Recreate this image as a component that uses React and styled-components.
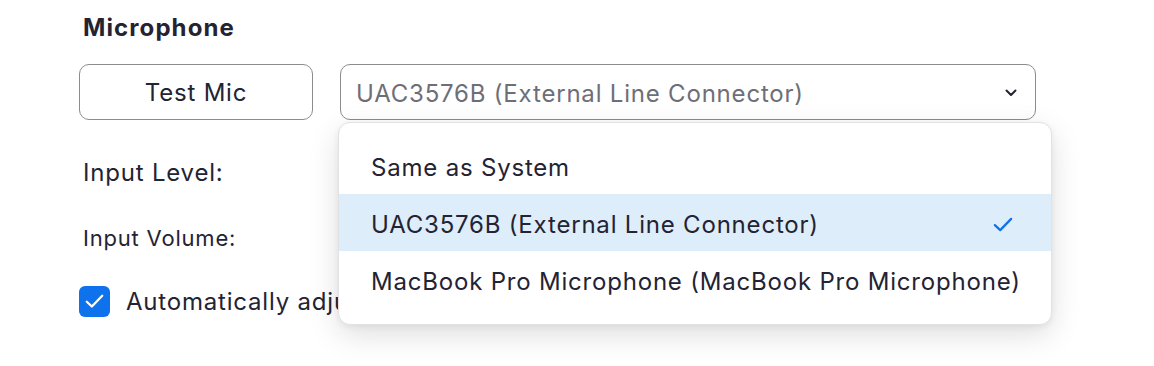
import React from "react";
import styled, { createGlobalStyle } from "styled-components";

const Global = createGlobalStyle`
  html, body { margin: 0; padding: 0; background: #ffffff; }
  body { font-family: Inter, "Noto Sans", sans-serif; color: #232333; letter-spacing: 0.8px; -webkit-font-smoothing: antialiased; }
`;

const Page = styled.div`
  width: 1154px;
  height: 366px;
  overflow: hidden;
  padding: 13px 0 0 79px;
  box-sizing: border-box;
  display: flex;
  flex-direction: column;
  white-space: nowrap;
`;

const Heading = styled.div`
  font-size: 24px;
  font-weight: 700;
  line-height: 30px;
  padding-left: 4px;
  letter-spacing: 1.1px;
`;

const ControlRow = styled.div`
  display: flex;
  gap: 27px;
  margin-top: 21px;
`;

const Button = styled.button`
  width: 234px;
  height: 56px;
  box-sizing: border-box;
  border: 1.5px solid #8c8c8c;
  border-radius: 10px;
  background: #fff;
  font-family: inherit;
  letter-spacing: inherit;
  font-size: 24px;
  color: #232333;
  padding: 1px 0 0;
`;

const SelectWrap = styled.div`
  position: relative;
`;

const SelectBox = styled.div`
  width: 696px;
  height: 56px;
  box-sizing: border-box;
  border: 1.5px solid #8c8c8c;
  border-radius: 10px;
  display: flex;
  align-items: center;
  justify-content: space-between;
  padding: 2px 18px 0 15px;
  font-size: 24px;
  color: #6e6e78;
`;

const Menu = styled.div`
  position: absolute;
  top: 58px;
  left: -2px;
  width: 714px;
  box-sizing: border-box;
  background: #fff;
  border: 1px solid #e2e2e6;
  border-radius: 12px;
  box-shadow: 0 10px 30px rgba(0, 0, 0, 0.13), 0 2px 6px rgba(0, 0, 0, 0.06);
  padding: 14px 0 16px;
  display: flex;
  flex-direction: column;
  z-index: 5;
`;

const MenuItem = styled.div`
  height: 57px;
  box-sizing: border-box;
  display: flex;
  align-items: center;
  justify-content: space-between;
  padding: 4px 38px 0 32px;
  font-size: 24px;
  white-space: nowrap;
  color: #232333;
  background: ${(p) => (p.$active ? "#deedfa" : "transparent")};
`;

const Label = styled.div`
  font-size: ${(p) => p.$size || 24}px;
  line-height: 30px;
  padding-left: 4px;
  margin-top: ${(p) => p.$mt}px;
`;

const CheckRow = styled.div`
  display: flex;
  align-items: center;
  gap: 16px;
  margin-top: 33px;
  font-size: 24px;
`;

const CheckBox = styled.div`
  width: 31px;
  height: 31px;
  flex: none;
  border-radius: 6px;
  background: #0e72ed;
  display: flex;
  align-items: center;
  justify-content: center;
`;

const Chevron = () => (
  <svg width="12" height="8" viewBox="0 0 12 8" fill="none">
    <path d="M1.5 1.5 L6 6 L10.5 1.5" stroke="#232333" strokeWidth="2" strokeLinecap="round" strokeLinejoin="round" />
  </svg>
);

const Tick = ({ color, w = 18, sw = 2.4 }) => (
  <svg width={w} height={w * 0.75} viewBox="0 0 16 12" fill="none">
    <path d="M1.5 6.5 L5.8 10.5 L14.5 1.5" stroke={color} strokeWidth={sw} strokeLinecap="round" strokeLinejoin="round" />
  </svg>
);

export default function App() {
  return (
    <>
      <Global />
      <Page>
        <Heading>Microphone</Heading>
        <ControlRow>
          <Button>Test Mic</Button>
          <SelectWrap>
            <SelectBox>
              <span>UAC3576B (External Line Connector)</span>
              <Chevron />
            </SelectBox>
            <Menu>
              <MenuItem>Same as System</MenuItem>
              <MenuItem $active>
                <span>UAC3576B (External Line Connector)</span>
                <Tick color="#0e72ed" w={20} sw={1.8} />
              </MenuItem>
              <MenuItem>MacBook Pro Microphone (MacBook Pro Microphone)</MenuItem>
            </Menu>
          </SelectWrap>
        </ControlRow>
        <Label $mt={38}>Input Level:</Label>
        <Label $mt={35} $size={22}>Input Volume:</Label>
        <CheckRow>
          <CheckBox>
            <Tick color="#ffffff" w={19} sw={1.9} />
          </CheckBox>
          <span>Automatically adjust microphone volume</span>
        </CheckRow>
      </Page>
    </>
  );
}
